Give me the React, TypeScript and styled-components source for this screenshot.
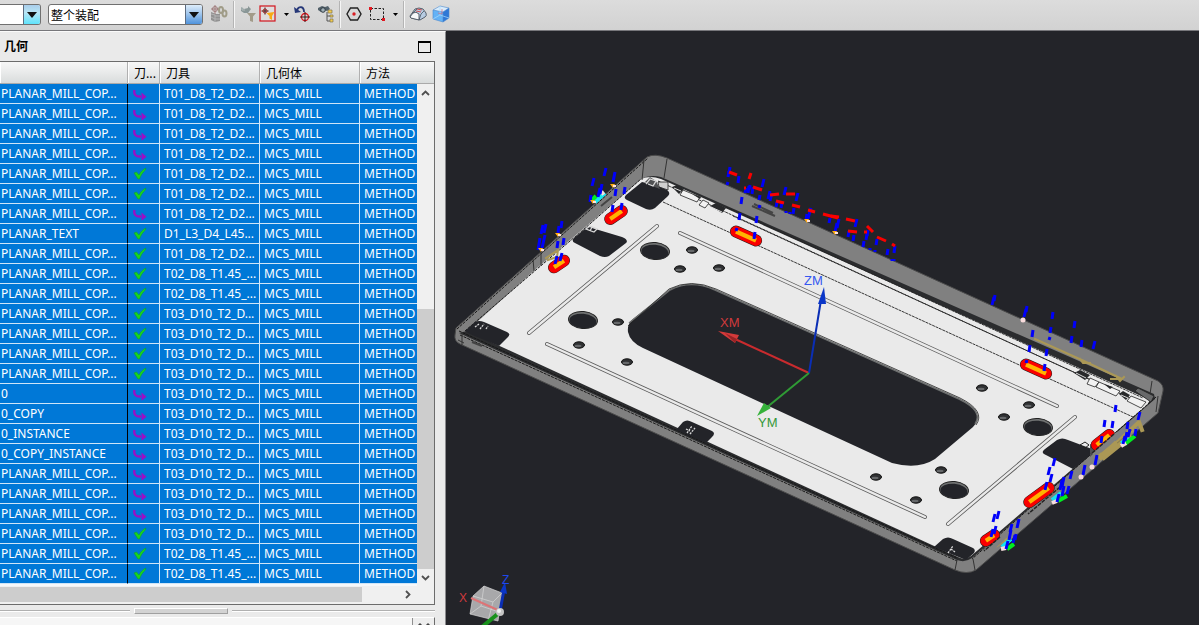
import React from "react";
import styled, { createGlobalStyle } from "styled-components";

const GlobalStyle = createGlobalStyle`
  * { box-sizing: border-box; }
  body {
    margin: 0;
    background: #eaeaea;
    color: #000;
    font-family: "Noto Sans", "Noto Sans CJK SC", sans-serif;
    font-size: 12px;
  }
  button, select { font: inherit; color: inherit; }
`;

const Page = styled.div`
  display: flex;
  flex-direction: column;
  height: 100vh;
  overflow: hidden;
`;

/* ---------- toolbar ---------- */

const Toolbar = styled.header`
  display: flex;
  flex: none;
  align-items: center;
  height: 31px;
  padding-bottom: 2px;
  background: linear-gradient(#dcdcdc, #d2d2d2);
  border-bottom: 1px solid #77777b;
`;

const Combo = styled.label<{ $width: number; $first?: boolean }>`
  display: grid;
  flex: none;
  width: ${(p) => p.$width}px;
  height: 21px;
  margin-right: 7px;
  background: #fff;
  border: 1px solid #707070;
  border-left-width: ${(p) => (p.$first ? 0 : 1)}px;
  border-radius: ${(p) => (p.$first ? "0 3px 3px 0" : "3px")};
  overflow: hidden;
`;

const ComboSelect = styled.select`
  grid-area: 1 / 1;
  width: 100%;
  padding: 0 18px 0 2px;
  border: 0;
  background: transparent;
  appearance: none;
  font-family: "Noto Sans CJK SC", sans-serif;
  outline: none;
`;

const ComboArrow = styled.span<{ $cyan?: boolean }>`
  display: grid;
  grid-area: 1 / 1;
  place-items: center;
  justify-self: end;
  width: 17px;
  border-left: 1px solid #5c6c80;
  background: ${(p) =>
    p.$cyan
      ? "linear-gradient(#a9cdea, #b8e6f6 40%, #5fe3fb)"
      : "linear-gradient(#dcecfa, #a9cbee 40%, #4f93dc)"};
  pointer-events: none;
`;

const ToolButton = styled.button<{ $width?: number; $after?: number }>`
  display: grid;
  flex: none;
  place-items: center;
  width: ${(p) => p.$width ?? 18}px;
  height: 22px;
  margin: 0 ${(p) => p.$after ?? 0}px 0 0;
  padding: 0;
  border: 0;
  background: none;
`;

const Separator = styled.span<{ $after?: number }>`
  flex: none;
  width: 2px;
  height: 27px;
  margin-right: ${(p) => p.$after ?? 4}px;
  background: #f6f6f6;
  border-left: 1px solid #b4b4b4;
`;

const Glyph = ({ children }: { children: React.ReactNode }) => (
  <svg width="18" height="18" viewBox="0 0 18 18" fill="none" aria-hidden="true">
    {children}
  </svg>
);

const Caret = () => (
  <svg width="5" height="3" viewBox="0 0 5 3" aria-hidden="true">
    <path d="M0 0H5L2.500 3Z" fill="#000" />
  </svg>
);

const ComboTriangle = () => (
  <svg width="10" height="7" viewBox="0 0 10 7" aria-hidden="true">
    <path d="M0 1H10L5 7Z" fill="#111" />
  </svg>
);

/* ---------- docked panel ---------- */

const Main = styled.div`
  display: flex;
  flex: 1;
  min-height: 0;
`;

const Dock = styled.section`
  display: flex;
  flex: 0 0 446px;
  flex-direction: column;
  min-height: 0;
  background: #eaeaea;
  border-top: 1px solid #fafafa;
  border-right: 1px solid #8b8b8e;
`;

const DockTitle = styled.div`
  display: flex;
  flex: none;
  align-items: center;
  justify-content: space-between;
  height: 29px;
  padding: 0 14px 3px 4px;
`;

const Heading = styled.h2`
  margin: 0;
  font-family: "Noto Sans CJK SC", sans-serif;
  font-size: 12px;
  font-weight: 700;
`;

const MaxButton = styled.button`
  width: 13px;
  height: 12px;
  margin-top: 4px;
  padding: 0;
  border: 1px solid #000;
  border-top-width: 2px;
  background: none;
`;

const Frame = styled.div`
  display: grid;
  flex: 0 1 544px;
  grid-template: 22px minmax(0, 1fr) 18px / minmax(0, 1fr) 17px;
  margin-right: 10px;
  border: solid #6c6c6c;
  border-width: 1px 1px 1px 0;
  background: #f0f0f0;
`;

const HeaderFill = styled.div`
  background: linear-gradient(#f7f7f7, #eceded 40%, #d9dcdc);
  border-bottom: 1px solid #aaa;
`;

const TableClip = styled.div`
  grid-row: 1 / 3;
  grid-column: 1;
  overflow: hidden;
  background: #f6f8fa;
`;

const Table = styled.table`
  width: 460px;
  table-layout: fixed;
  border-collapse: separate;
  border-spacing: 0;
`;

const Th = styled.th`
  height: 22px;
  padding: 0 0 0 6px;
  background: linear-gradient(#f7f7f7, #eceded 40%, #d9dcdc);
  border-right: 1px solid #b0b0b0;
  border-bottom: 1px solid #aaa;
  box-shadow: inset 1px 0 #fff;
  font-family: "Noto Sans CJK SC", sans-serif;
  font-size: 12px;
  font-weight: 400;
  line-height: 20px;
  text-align: left;
  white-space: nowrap;
`;

const Td = styled.td<{ $first?: boolean; $icon?: boolean }>`
  height: 20px;
  padding: 0 0 0 ${(p) => (p.$first ? 1 : p.$icon ? 5 : 4)}px;
  background: #0078d7;
  border-right: 1px solid ${(p) => (p.$first ? "#000" : "#d4e8f8")};
  border-bottom: 1px solid #cfe5f7;
  color: #fff;
  font-size: 12px;
  line-height: 19px;
  white-space: nowrap;
  overflow: hidden;
  svg { display: block; }
`;

const VScroll = styled.div`
  display: grid;
  grid-template-rows: 18px 207px minmax(0, 1fr) 17px;
  background: #f0f0f0;
`;

const HScroll = styled.div`
  display: grid;
  grid-column: 1 / 3;
  grid-template-columns: 362px minmax(0, 1fr) 17px 18px;
  padding: 1px 0 2px;
`;

const Thumb = styled.div<{ $row?: number }>`
  grid-row: ${(p) => p.$row ?? 1};
  background: #cdcdcd;
`;

const ScrollButton = styled.button<{ $row?: number; $col?: number }>`
  display: grid;
  grid-row: ${(p) => p.$row ?? 1};
  grid-column: ${(p) => p.$col ?? 1};
  place-items: center;
  padding: 0;
  border: 0;
  background: none;
`;

const Splitter = styled.div`
  display: grid;
  flex: none;
  grid-template-columns: 130px 94px minmax(0, 1fr);
  column-gap: 4px;
  align-items: center;
  height: 12px;
  margin-right: 10px;
`;

const Rule = styled.span`
  height: 2px;
  border-top: 1px solid #b0b0b0;
  background: #fff;
`;

const Grip = styled.span`
  height: 6px;
  background: #d3d3d3;
  border: 1px solid #fff;
  border-right-color: #a0a0a0;
  border-bottom-color: #a0a0a0;
`;

const NextPanel = styled.div`
  display: grid;
  flex: 1;
  grid-template-columns: minmax(0, 1fr) 22px;
  min-height: 8px;
  margin-right: 10px;
  overflow: hidden;
  background: #f6f6f6;
  border-top: 1px solid #fff;
  border-right: 1px solid #6c6c6c;
`;

const Expand = styled.button`
  grid-column: 2;
  padding: 4px 0 0;
  border: 0;
  border-left: 1px solid #909090;
  background: #eee;
  line-height: 0;
`;

const Viewport = styled.main`
  flex: 1;
  min-width: 0;
  background: #232429;
  overflow: hidden;
`;

const Scene = styled.svg`
  display: block;
  width: 100%;
  height: 100%;
  font-family: "Liberation Sans", Arial, sans-serif;
`;

/* ---------- table data ---------- */

const P = "PLANAR_MILL_COP...";
const T1 = "T01_D8_T2_D2...";
const T2 = "T02_D8_T1.45_...";
const T3 = "T03_D10_T2_D...";

const rows: [string, boolean, string][] = [
  [P, false, T1], [P, false, T1], [P, false, T1], [P, false, T1],
  [P, true, T1], [P, true, T1], [P, false, T1],
  ["PLANAR_TEXT", true, "D1_L3_D4_L45..."],
  [P, true, T1], [P, true, T2], [P, true, T2],
  [P, true, T3], [P, true, T3], [P, true, T3], [P, true, T3],
  ["0", false, T3], ["0_COPY", false, T3], ["0_INSTANCE", false, T3],
  ["0_COPY_INSTANCE", false, T3],
  [P, false, T3], [P, false, T3], [P, false, T3],
  [P, true, T3], [P, true, T2], [P, true, T2],
];

const StatusIcon = ({ done }: { done: boolean }) =>
  done ? (
    <svg width="14" height="13" viewBox="0 0 14 13" role="img" aria-label="done">
      <path d="M1 6L3.500 5L6 8C7.500 5 9.500 2.500 13 1L12.500 3C9.500 5.500 8 8.500 6.500 12H5Z" fill="#18d61c" stroke="#0b9a3c" strokeWidth="0.6" />
    </svg>
  ) : (
    <svg width="14" height="15" viewBox="0 -2 14 15" role="img" aria-label="repost">
      <path d="M1.500 2C0.500 6 2.500 9 8 8.500" fill="none" stroke="#9a10c4" strokeWidth="2.4" />
      <path d="M8.500 4.500L13.500 8.800L8.500 12.800Z" fill="#9a10c4" />
    </svg>
  );

const Chevron = ({ turn }: { turn: number }) => (
  <svg width="9" height="9" viewBox="0 0 9 9" aria-hidden="true">
    <path d="M1 6L4.500 2.500L8 6" fill="none" stroke="#505050" strokeWidth="1.8" transform={`rotate(${turn} 4.5 4.5)`} />
  </svg>
);

/* ---------- part model ---------- */

const largeHoles = [[655, 251], [583, 320], [1038, 427], [954, 490]];
const smallHoles = [
  [680, 269], [618, 322], [579, 345], [627, 362], [692, 250], [719, 268],
  [982, 388], [1029, 405], [1004, 417], [941, 470], [876, 477], [916, 500],
];
const grooves = ["M657 226L529 333", "M680 233L1057 406", "M547 344L925 517", "M1075 417L948 524"];
const pads = [
  "M626 195L642 182L655 185L667 190Q671 193 668 196L655 208Q651 211 646 209L627 200Q623 198 626 195Z",
  "M574 238L586 228Q588 226 592 228L622 237Q629 240 626 243L609 256Q605 258 600 256L575 243Q571 241 574 238Z",
  "M465 331L475 322Q479 320 484 322L507 332Q511 334 508 337L499 346L470 334Z",
  "M676 430L683 422Q687 419 692 422L712 431Q716 433 712 437L706 443Z",
  "M934 547L943 539Q948 536 953 539L973 548Q976 550 974 553L966 560Z",
  "M1044 454Q1041 452 1045 449L1057 440Q1062 437 1068 440L1092 449L1093 453L1073 469Z",
];
/* centre x, centre y, angle, half length */
const pockets = [
  [616, 215, -34, 7], [559, 264, -34, 6], [746, 236, 24, 11],
  [1036, 369, 24, 11], [1103, 440, -38, 8], [1039, 495, -36, 12], [990, 538, -34, 5],
];
/* x, y of the lower end and length */
const feeds = [
  [592, 186, 8], [604, 176, 8], [613, 182, 10], [600, 194, 10], [598, 197, 9], [590, 202, 7], [615, 196, 7], [624, 194, 7], [612, 212, 7], [621, 210, 7],
  [541, 234, 9], [544, 233, 9], [538, 250, 12], [542, 248, 13], [558, 233, 7], [561, 228, 7], [557, 248, 7], [563, 245, 7], [555, 264, 8], [560, 261, 8],
  [729, 173, 6], [728, 177, 6], [727, 185, 3], [738, 183, 7], [762, 187, 8], [749, 190, 5], [748, 193, 7], [745, 193, 5], [752, 194, 7], [741, 204, 7], [759, 200, 5], [759, 208, 3],
  [739, 220, 7], [756, 223, 7], [754, 239, 7], [736, 231, 3], [768, 199, 8], [770, 201, 8], [784, 195, 8], [796, 201, 8], [776, 207, 5], [781, 208, 6], [793, 214, 6], [786, 213, 2], [790, 214, 2],
  [810, 211, 3], [808, 219, 8], [806, 220, 6], [829, 223, 5], [837, 228, 9], [835, 232, 9], [855, 227, 8], [848, 237, 6], [853, 241, 6], [867, 236, 6], [866, 240, 6], [863, 247, 6], [876, 245, 6], [887, 255, 6], [894, 253, 7], [892, 261, 2], [894, 261, 2], [870, 250, 2], [875, 252, 2],
  [992, 305, 8], [994, 301, 6], [1024, 317, 8], [1026, 312, 6], [1052, 319, 7], [1074, 328, 7], [1032, 337, 7], [1050, 333, 6], [1049, 340, 3], [1071, 343, 7], [1081, 347, 7], [1093, 349, 8], [1029, 352, 7], [1046, 356, 7], [1044, 371, 7], [1026, 363, 3],
  [1115, 412, 7], [1104, 427, 7], [1112, 428, 7], [1138, 420, 8], [1127, 429, 7], [1128, 437, 8], [1123, 444, 8], [1125, 441, 9], [1135, 436, 7], [1101, 443, 7],
  [1053, 466, 8], [1048, 475, 8], [1050, 482, 8], [1045, 490, 8], [1070, 479, 8], [1083, 475, 10], [1095, 465, 10], [1060, 490, 10], [1062, 487, 10], [1062, 496, 10], [1067, 494, 8], [1057, 502, 8],
  [993, 522, 8], [997, 519, 8], [994, 534, 8], [991, 537, 8], [1010, 532, 8], [1017, 528, 9], [1009, 540, 10], [1013, 543, 8], [1015, 540, 6], [1006, 549, 8],
];
const cuts = [
  "M729 172L737 175", "M749 179L751 173", "M744 188H746", "M753 187L762 190", "M770 195L779 194", "M786 194H795", "M776 201L784 203",
  "M792 205L800 207", "M808 210L815 212", "M823 214L838 218", "M831 216L839 217", "M846 219L855 221", "M848 231L857 232", "M867 226L873 232",
  "M864 232H867", "M877 237L886 241", "M892 244L895 246",
];
const tips = [[613, 186], [593, 202], [558, 235], [541, 250], [807, 221], [835, 233]];
const paleTips = [[1023, 320], [1081, 477], [1092, 467]];

const Model = () => (
  <Scene viewBox="446 31 753 594" role="img" aria-label="3D view">
    <path d="M456 328L647 157Q655 153 667 158L1158 381Q1164 385 1163 391L1158 413L976 570Q967 575 955 570L460 344Q454 341 455 335Z" fill="#808080" stroke="#4b4b4b" strokeWidth="1" />
    <path d="M459 333L467 331L641 179Q650 174 661 177L1154 394L1155 399L972 558Q965 563 957 560Z" fill="#2b2c2e" />
    <path d="M467 331L537 268L583 229L641 179Q650 175 661 179L1150 400L1147 405L971 556Q965 561 958 557Z" fill="#eaeaea" />
    <path d="M457 329L648 158M460 335L957 561M459 331L957 558M1156 397L972 559M465 331L537 269L583 230L641 179" stroke="#171717" strokeWidth="1" strokeDasharray="3 1" fill="none" />
    <path d="M458 340L464 343M462 333V345M644 160L642 180M667 159L664 178M533 259L534 271M541 252L541 266M1152 381L1150 394M1158 396L1156 412M957 560L955 570M973 559L975 570" stroke="#333" fill="none" />
    <path d="M663 202L1133 417M658 181L1143 404M733 216L1139 402M726 207L1143 398" stroke="#222" strokeWidth="0.9" strokeDasharray="3 0.7" fill="none" />
    <path d="M752 206L775 216M754 204L773 213M601 206L612 197M472 342L482 346" stroke="#444" strokeWidth="2" fill="none" />

    {/* clips along the upper rim */}
    <g stroke="#232323" strokeWidth="0.8" fill="#f2f2f2">
      <path d="M658 182L668 182L668 190L659 187Z" fill="#d0d0d0" />
      <path d="M683 190L700 197L697 202L680 195Z" />
      <path d="M703 200L709 203L705 208L699 205Z" />
      <path d="M1090 378L1099 382L1095 387L1087 384Z" />
      <path d="M1099 382L1120 391L1116 396L1096 387Z" />
      <path d="M1131 396L1146 402L1141 408L1127 401Z" />
    </g>
    <path d="M672 187L677 185L684 189L679 194ZM710 206L716 203L726 208L722 213ZM1074 373L1080 370L1090 375L1085 380ZM1119 394L1123 391L1130 395L1126 400ZM692 194L701 197L700 199ZM1104 384L1113 387L1110 389Z" fill="#28292b" />
    <path d="M711 207L722 212M674 188L681 191M1076 373L1086 378M1121 395L1128 398" stroke="#ddd" strokeWidth="1" />
    <path d="M1135 391L1138 388L1154 396L1151 402Z" fill="#68696a" stroke="#222" strokeWidth="0.8" />

    {grooves.map((d) => (
      <g key={d} strokeLinecap="round" fill="none">
        <path d={d} stroke="#5b5b5b" strokeWidth="4" />
        <path d={d} stroke="#eaeaea" strokeWidth="2.400" />
      </g>
    ))}

    <path d="M628 332Q627 324 633 319L670 290Q691 279 715 290L959 399Q986 412 973 427L935 459Q918 470 892 463L643 348Q630 342 628 332Z" fill="#232429" />
    <path d="M629 323L670 290Q691 279 715 290L959 399Q984 411 975 424" fill="none" stroke="#6c6e6e" strokeWidth="1.500" />
    <path d="M628 326L669 289Q691 278 716 289L960 398Q986 411 976 425" fill="none" stroke="#222" strokeWidth="0.8" />

    {largeHoles.map(([x, y]) => (
      <g key={`${x}-${y}`}>
        <ellipse cx={x} cy={y} rx="14.500" ry="8.500" fill="#707272" stroke="#222" transform={`rotate(5 ${x} ${y})`} />
        <ellipse cx={x} cy={y + 1} rx="13.500" ry="7.200" fill="#232429" transform={`rotate(5 ${x} ${y})`} />
      </g>
    ))}
    {smallHoles.map(([x, y]) => (
      <g key={`${x}-${y}`}>
        <ellipse cx={x} cy={y} rx="5.500" ry="3.200" fill="#303133" stroke="#111" />
        <ellipse cx={x - 1} cy={y + 1} rx="3.500" ry="1.200" fill="#66686a" />
      </g>
    ))}

    {pads.map((d) => <path key={d} d={d} fill="#232429" />)}
    <path d="M645 182L650 177L656 181L660 189L652 186ZM1090 444V457L1095 452V446Z" fill="#515254" />
    <g fill="none" stroke="#d8d8d8" strokeWidth="1.300">
      <path d="M646 184L650 179L656 181L653 186L648 184M586 229L590 226L597 229L594 232ZM592 227L590 231" />
      <path d="M475 327L479 324M480 329L484 324M486 329L488 326M687 433L692 426M690 434L695 428M686 429L690 431M948 553L953 546M951 549L955 552" strokeDasharray="2 1" />
    </g>
    <path d="M1080 445L1085 442L1089 445L1085 448Z" fill="none" stroke="#222" />

    <g fill="none" stroke="#ab9855" strokeLinecap="square">
      <path d="M1035 339L1084 361L1122 379L1111 379M1080 359L1083 363L1090 363M1116 376L1120 381L1124 377" strokeWidth="2" />
      <path d="M1101 458L1139 422L1142 430M1100 456L1134 429M1104 458L1130 437M1097 448L1099 453" strokeWidth="4" />
      <path d="M546 258L558 250L557 257L548 260M1043 504L1048 502M1050 493L1058 490M997 546L1007 539" strokeWidth="2" />
    </g>
    <path d="M1106 453L1132 430" stroke="#7f7650" strokeWidth="1" />

    {pockets.map(([x, y, a, h]) => (
      <g key={`${x}-${y}`} transform={`translate(${x} ${y}) rotate(${a})`} strokeLinecap="round">
        <path d={`M${-h} 0H${h}`} stroke="#202020" strokeWidth="12" />
        <path d={`M${-h} 0H${h}`} stroke="#fa0000" strokeWidth="11" />
        <path d={`M${-h} 0H${h}`} stroke="#ffb400" strokeWidth="4.200" strokeLinecap="butt" />
      </g>
    ))}
    <path d="M1118 434L1094 455M1064 488L1031 516M1003 538L987 552" stroke="#808080" strokeWidth="5" />
    <path d="M1114 434L1091 454M1060 487L1028 514M1000 537L984 551" stroke="#252525" strokeWidth="1.500" strokeDasharray="4 1" />
    <path d="M1103 456L1117 443" stroke="#ab9855" strokeWidth="6" />

    <g strokeWidth="4">
      <path d="M595 202L605 193M1121 443L1130 439M1052 500L1061 493M1002 547L1011 539" stroke="#13e5f0" />
      <path d="M1125 444L1135 436M1058 501L1067 496M1007 549L1014 544M592 200L596 196" stroke="#00ee20" />
      <path d="M1121 446L1126 443M1052 503L1057 501M1001 549L1006 548M601 194L604 192" stroke="#f7dede" />
    </g>

    <g stroke="#0000fa" strokeWidth="3">
      {feeds.map(([x, y, l], i) => (
        <path key={i} d={`M${x} ${y}L${x + Math.round(l / 5)} ${y - l}`} />
      ))}
    </g>
    <g stroke="#fa0000" strokeWidth="3">
      {cuts.map((d) => <path key={d} d={d} />)}
    </g>
    {tips.map(([x, y]) => (
      <g key={`${x}-${y}`}>
        <path d={`M${x - 3} ${y - 2}H${x + 2}L${x} ${y + 2}Z`} fill="#ffad12" />
        <path d={`M${x} ${y - 1}H${x + 3}V${y + 1}H${x}Z`} fill="#ffe2df" />
      </g>
    ))}
    {paleTips.map(([x, y]) => <circle key={`${x}-${y}`} cx={x} cy={y} r="2.500" fill="#f9dcdc" />)}

    <g fill="none" strokeWidth="2">
      <path d="M809 373L735 339" stroke="#c92b2e" />
      <path d="M809 373L821 300" stroke="#0a2eb5" />
      <path d="M809 373L766 408" stroke="#2f9b35" />
    </g>
    <path d="M718 331L739 335L735 343Z" fill="#d43a3a" />
    <path d="M725 333L737 339L735 343Z" fill="#982426" />
    <path d="M824 287L826 304L818 304Z" fill="#0a36c8" />
    <path d="M757 416L764 403L771 408Z" fill="#36b23b" />
    <g fontSize="13">
      <text x="720" y="327" fill="#cf3a3d">XM</text>
      <text x="804" y="285" fill="#3558f0">ZM</text>
      <text x="758" y="427" fill="#35983a">YM</text>
    </g>

    <path d="M484 586L502 593L498 621L470 614L473 596Z" fill="#a8a8aa" />
    <path d="M473 596L493 602L502 593M493 602L488 621M473 596L484 586L502 593L498 621L470 614ZM484 586L481 606L470 614M481 606L499 612" fill="none" stroke="#d5d5d6" strokeWidth="0.700" />
    <path d="M500 611L471 598" stroke="#dd7376" strokeWidth="2" />
    <path d="M500 611L504 590" stroke="#0a2eb5" strokeWidth="3" />
    <path d="M505 582L507 594L500 592Z" fill="#0a36c8" />
    <path d="M500 612L482 627" stroke="#18911c" strokeWidth="4" />
    <circle cx="500" cy="612" r="4" fill="#c4c4c4" />
    <circle cx="499" cy="611" r="2" fill="#f2f2f2" />
    <g fontSize="12">
      <text x="459" y="602" fill="#cf3a3d">X</text>
      <text x="502" y="584" fill="#1f48ee">Z</text>
    </g>
  </Scene>
);

export default function App() {
  return (
    <Page>
      <GlobalStyle />
      <Toolbar>
        <Combo $width={41} $first>
          <ComboSelect aria-label="Filter" />
          <ComboArrow $cyan><ComboTriangle /></ComboArrow>
        </Combo>
        <Combo $width={155}>
          <ComboSelect aria-label="Scope">
            <option>整个装配</option>
          </ComboSelect>
          <ComboArrow><ComboTriangle /></ComboArrow>
        </Combo>
        <ToolButton aria-label="Interpart link" $after={5}>
          <Glyph>
            <path d="M1 7L6 9H10V16L5 17L1 15Z" fill="#929292" />
            <path d="M1 9L5 10V17M5 11H10M1 12L5 14H10" stroke="#b4b4b4" />
            <path d="M5 0V9M1 4H9" stroke="#a07c7c" />
            <circle cx="5" cy="4" r="2.500" stroke="#a07c7c" />
            <ellipse cx="11" cy="5" rx="2" ry="3" stroke="#a09c88" strokeWidth="2" />
            <ellipse cx="14.500" cy="8.500" rx="2" ry="3" stroke="#a09c88" strokeWidth="2" />
          </Glyph>
        </ToolButton>
        <Separator />
        <ToolButton aria-label="Reset filter" $after={2}>
          <Glyph>
            <path d="M2 2L5 4L9 3V1L12 4L9 8L5 8L2 6Z" fill="#8a9797" />
            <path d="M3 2V5H6" stroke="#b3bcbc" />
            <path d="M8 8H17L14 11.500V17L11 16V11.500Z" fill="#a29b89" />
          </Glyph>
        </ToolButton>
        <ToolButton aria-label="Snap filter" $after={4}>
          <Glyph>
            <rect x="1" y="1" width="15" height="15" fill="#dfdddd" stroke="#d3141d" strokeWidth="1.200" />
            <path d="M6 2.500V9.500M2.500 6H9.500" stroke="#3a1515" />
            <circle cx="6" cy="6" r="2" stroke="#a03030" />
            <path d="M7.500 8L15.500 7L13 11V15L10.500 13.500V11Z" fill="#f8aa13" />
          </Glyph>
        </ToolButton>
        <ToolButton aria-label="Snap options" $width={10} $after={3}><Caret /></ToolButton>
        <ToolButton aria-label="Orient" $after={5}>
          <Glyph>
            <path d="M3 5C5 1 10 1 10 7" stroke="#263778" strokeWidth="1.800" />
            <path d="M0 2L1 8L7 7Z" fill="#263778" />
            <circle cx="11" cy="12" r="3.500" stroke="#dc1720" strokeWidth="1.300" />
            <path d="M11 7V17M6 12H16" stroke="#3a1515" />
          </Glyph>
        </ToolButton>
        <ToolButton aria-label="Find in navigator" $after={4}>
          <Glyph>
            <path d="M1 3L5 1L8 2L11 1L13 4L10 6L7 5L4 7L1 5Z" fill="#53616a" />
            <circle cx="6" cy="5" r="2.300" fill="#a2b1b8" stroke="#303b43" />
            <path d="M10 7V16H13M10 11H13" stroke="#555" />
            <path d="M11 5H15V8H11ZM13 10H16V12H13ZM13 14H16V17H13Z" fill="#f4cc4c" stroke="#7b7254" strokeWidth="0.700" />
          </Glyph>
        </ToolButton>
        <Separator />
        <ToolButton aria-label="Point" $after={5}>
          <Glyph>
            <path d="M5.500 3H12.500L16 9L12.500 15H5.500L2 9Z" stroke="#222" strokeWidth="1.400" />
            <circle cx="9" cy="9" r="1.700" fill="#d81e24" />
          </Glyph>
        </ToolButton>
        <ToolButton aria-label="Rectangle select" $after={4}>
          <Glyph>
            <path d="M2.500 3.500H15.500V14.500H2.500Z" stroke="#222" strokeDasharray="2.500 1.500" />
            <path d="M1 2H4V5H1ZM14 13H17V16H14Z" fill="#e01820" />
          </Glyph>
        </ToolButton>
        <ToolButton aria-label="Select options" $width={10} $after={3}><Caret /></ToolButton>
        <Separator />
        <ToolButton aria-label="Shaded body" $after={5}>
          <Glyph>
            <path d="M1 11L6 4Q10 2 14 4L17 8Q18 11 16 12L11 15L2 13Z" fill="#b8cce2" stroke="#4a5460" strokeWidth="0.900" />
            <path d="M1 12L4 8Q7 6 10 9L10 15L2 13Z" fill="#f6f8fa" stroke="#4a5460" strokeWidth="0.900" />
            <path d="M10 15L12 9L15 6M4 8L8 4" stroke="#4a5460" strokeWidth="0.800" />
            <path d="M7 6L12 7M8 4L13 5" stroke="#d05050" />
          </Glyph>
        </ToolButton>
        <ToolButton aria-label="Cube view">
          <Glyph>
            <path d="M1 5L8 1L17 3L11 7Z" fill="#d9ecfb" />
            <path d="M1 5L11 7V17L1 14Z" fill="#63b2f6" />
            <path d="M17 3L11 7V17L17 13Z" fill="#2f78d6" />
            <path d="M1 5L8 1L17 3V13L11 17L1 14ZM1 5L11 7L17 3M11 7V17" stroke="#4c88cf" strokeWidth="0.600" />
            <path d="M8 1V10L1 14M8 10L17 13" stroke="#a9dafa" strokeWidth="0.700" />
            <path d="M10 4V9L6 8" stroke="#d46a80" strokeWidth="0.700" />
          </Glyph>
        </ToolButton>
      </Toolbar>

      <Main>
        <Dock>
          <DockTitle>
            <Heading>几何</Heading>
            <MaxButton aria-label="Maximize" />
          </DockTitle>
          <Frame>
            <TableClip>
              <Table>
                <colgroup>
                  <col style={{ width: 128 }} />
                  <col style={{ width: 32 }} />
                  <col style={{ width: 100 }} />
                  <col style={{ width: 100 }} />
                  <col style={{ width: 100 }} />
                </colgroup>
                <thead>
                  <tr>
                    <Th aria-label="Name" />
                    <Th>刀...</Th>
                    <Th>刀具</Th>
                    <Th>几何体</Th>
                    <Th>方法</Th>
                  </tr>
                </thead>
                <tbody>
                  {rows.map(([name, done, tool], i) => (
                    <tr key={i}>
                      <Td $first>{name}</Td>
                      <Td $icon><StatusIcon done={done} /></Td>
                      <Td>{tool}</Td>
                      <Td>MCS_MILL</Td>
                      <Td>METHOD</Td>
                    </tr>
                  ))}
                </tbody>
              </Table>
            </TableClip>
            <HeaderFill />
            <VScroll>
              <ScrollButton aria-label="Scroll up"><Chevron turn={0} /></ScrollButton>
              <Thumb $row={3} />
              <ScrollButton aria-label="Scroll down" $row={4}><Chevron turn={180} /></ScrollButton>
            </VScroll>
            <HScroll>
              <Thumb />
              <ScrollButton aria-label="Scroll right" $col={3}><Chevron turn={90} /></ScrollButton>
            </HScroll>
          </Frame>
          <Splitter>
            <Rule />
            <Grip />
            <Rule />
          </Splitter>
          <NextPanel>
            <Expand aria-label="Expand">
              <svg width="16" height="6" viewBox="0 0 16 6" aria-hidden="true">
                <path d="M2 4L4 2L6 4M10 4L12 2L14 4" fill="none" stroke="#444" strokeWidth="1.500" />
              </svg>
            </Expand>
          </NextPanel>
        </Dock>
        <Viewport>
          <Model />
        </Viewport>
      </Main>
    </Page>
  );
}
